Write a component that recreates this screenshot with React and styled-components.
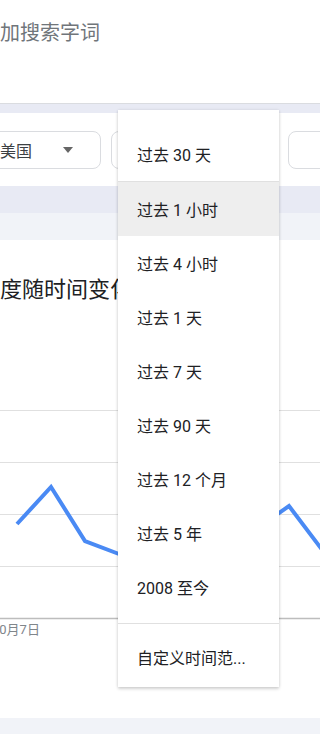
import React from "react";
import styled, { createGlobalStyle } from "styled-components";

const GlobalStyle = createGlobalStyle`
  body {
    margin: 0;
    font-family: Roboto, "Noto Sans CJK SC", sans-serif;
    background: #ffffff;
  }
`;

const ranges = [
  "过去 1 小时",
  "过去 4 小时",
  "过去 1 天",
  "过去 7 天",
  "过去 90 天",
  "过去 12 个月",
  "过去 5 年",
  "2008 至今",
];

const points = [
  [17, 119],
  [51, 82],
  [85, 136],
  [119, 149],
  [153, 140],
  [187, 128],
  [221, 135],
  [255, 125],
  [289, 101],
  [323, 146],
];

const TrendChart = () => (
  <ChartSvg width="320" height="215">
    {[5, 57, 109, 161].map((y) => (
      <line key={y} x1="0" x2="320" y1={y + 0.5} y2={y + 0.5} stroke="#e0e0e0" strokeWidth="1" />
    ))}
    <line x1="0" x2="320" y1="213.5" y2="213.5" stroke="#bdbdbd" strokeWidth="1.5" />
    <polyline
      points={points.map((p) => p.join(",")).join(" ")}
      fill="none"
      stroke="#4a8af4"
      strokeWidth="4"
    />
  </ChartSvg>
);

const App = () => {
  return (
    <>
      <GlobalStyle />
      <Page>
        <Header>
          <SearchHint>添加搜索字词</SearchHint>
        </Header>
        <Band $h={9} $bg="#e8eaf4" />
        <FilterRow>
          <Filter $w={117} $first>
            <FilterLabel>美国</FilterLabel>
            <Caret />
          </Filter>
          <Filter $w={167} />
          <Filter $w={160} />
        </FilterRow>
        <Band $h={27} $bg="#e8eaf4" />
        <Band $h={27} $bg="#f1f3f8" />
        <Card>
          <CardTitle>热度随时间变化</CardTitle>
          <TrendChart />
          <AxisLabel>10月7日</AxisLabel>
        </Card>
        <Band $h={16} $bg="#f1f3f8" />

        <Menu>
          <MenuItem $first>过去 30 天</MenuItem>
          <Divider />
          {ranges.map((r, i) => (
            <MenuItem key={r} $active={i === 0}>
              {r}
            </MenuItem>
          ))}
          <Divider $spaced />
          <MenuItem>自定义时间范...</MenuItem>
        </Menu>
      </Page>
    </>
  );
};

const Page = styled.div`
  position: relative;
  width: 320px;
  height: 734px;
  overflow: hidden;
  background: #ffffff;
`;

const Header = styled.div`
  height: 104px;
  box-sizing: border-box;
  border-bottom: 1px solid #dadce0;
  padding-top: 21px;
`;

const SearchHint = styled.div`
  margin-left: -20px;
  font-size: 20px;
  line-height: 24px;
  color: #70757a;
  white-space: nowrap;
`;

const Band = styled.div`
  height: ${(p) => p.$h}px;
  background: ${(p) => p.$bg};
`;

const FilterRow = styled.div`
  display: flex;
  gap: 10px;
  padding: 18px 0 17px;
  background: #ffffff;
`;

const Filter = styled.div`
  flex: 0 0 ${(p) => p.$w}px;
  margin-left: ${(p) => (p.$first ? "-16px" : "0")};
  height: 38px;
  box-sizing: border-box;
  border: 1px solid #dadce0;
  border-radius: 8px;
  display: flex;
  align-items: center;
  padding-left: 15px;
`;

const FilterLabel = styled.span`
  font-size: 16px;
  color: #3c4043;
  flex: 1;
`;

const Caret = styled.span`
  width: 0;
  height: 0;
  border-left: 5px solid transparent;
  border-right: 5px solid transparent;
  border-top: 6px solid #666666;
  margin-right: 27px;
`;

const Card = styled.div`
  height: 478px;
  background: #ffffff;
  padding-top: 38px;
  box-sizing: border-box;
`;

const CardTitle = styled.div`
  margin-left: -22px;
  font-size: 22px;
  line-height: 24px;
  color: #202124;
  white-space: nowrap;
`;

const ChartSvg = styled.svg`
  display: block;
  margin-top: 103px;
`;

const AxisLabel = styled.div`
  margin-left: -8px;
  margin-top: 3px;
  font-size: 13px;
  line-height: 14px;
  color: #80868b;
`;

const Menu = styled.div`
  position: absolute;
  left: 118px;
  top: 110px;
  width: 161px;
  padding: 16px 0 3px;
  background: #ffffff;
  box-shadow: 0 2px 3px rgba(0, 0, 0, 0.16), 0 0 3px rgba(0, 0, 0, 0.1);
`;

const MenuItem = styled.div`
  height: ${(p) => (p.$first ? 55 : 54)}px;
  display: flex;
  align-items: center;
  padding-left: 19px;
  font-size: 16px;
  color: #202124;
  white-space: nowrap;
  background: ${(p) => (p.$active ? "#eeeeee" : "transparent")};
`;

const Divider = styled.div`
  height: 1px;
  background: #e0e0e0;
  margin: ${(p) => (p.$spaced ? "9px 0 6px" : "0")};
`;

export default App;
